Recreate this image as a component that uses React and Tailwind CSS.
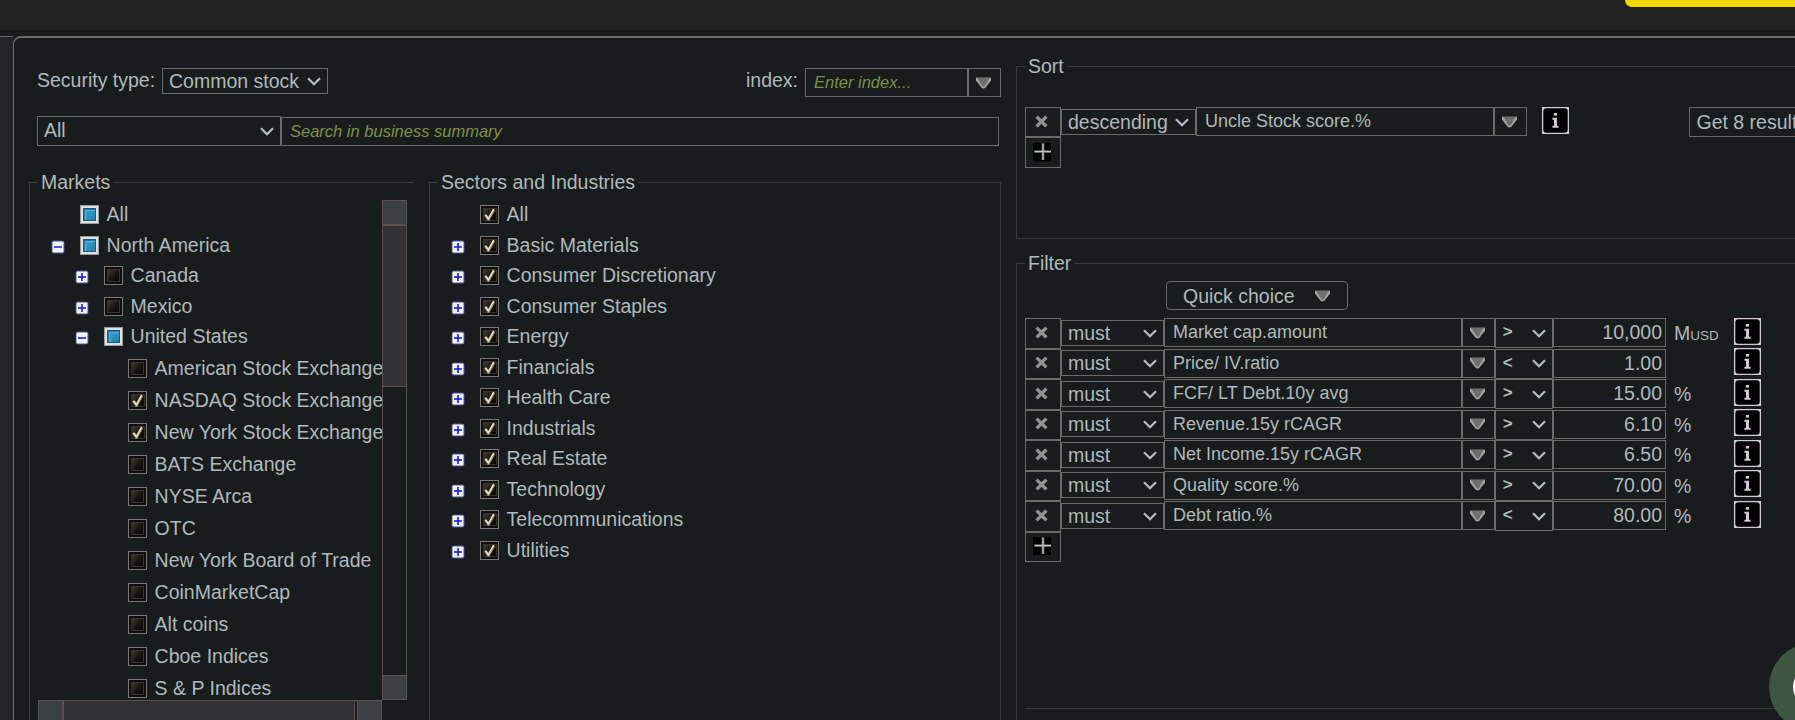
import React from "react";

const markets = [
  { label: "All", level: 0, state: "partial" },
  { label: "North America", level: 0, state: "partial", toggle: "minus" },
  { label: "Canada", level: 1, state: "off", toggle: "plus" },
  { label: "Mexico", level: 1, state: "off", toggle: "plus" },
  { label: "United States", level: 1, state: "partial", toggle: "minus" },
  { label: "American Stock Exchange", level: 2, state: "off" },
  { label: "NASDAQ Stock Exchange", level: 2, state: "on" },
  { label: "New York Stock Exchange", level: 2, state: "on" },
  { label: "BATS Exchange", level: 2, state: "off" },
  { label: "NYSE Arca", level: 2, state: "off" },
  { label: "OTC", level: 2, state: "off" },
  { label: "New York Board of Trade", level: 2, state: "off" },
  { label: "CoinMarketCap", level: 2, state: "off" },
  { label: "Alt coins", level: 2, state: "off" },
  { label: "Cboe Indices", level: 2, state: "off" },
  { label: "S & P Indices", level: 2, state: "off" },
];

const sectors = [
  "Basic Materials",
  "Consumer Discretionary",
  "Consumer Staples",
  "Energy",
  "Financials",
  "Health Care",
  "Industrials",
  "Real Estate",
  "Technology",
  "Telecommunications",
  "Utilities",
];

const filters = [
  { name: "Market cap.amount", op: ">", value: "10,000", unit: "M", sub: "USD" },
  { name: "Price/ IV.ratio", op: "<", value: "1.00", unit: "" },
  { name: "FCF/ LT Debt.10y avg", op: ">", value: "15.00", unit: "%" },
  { name: "Revenue.15y rCAGR", op: ">", value: "6.10", unit: "%" },
  { name: "Net Income.15y rCAGR", op: ">", value: "6.50", unit: "%" },
  { name: "Quality score.%", op: ">", value: "70.00", unit: "%" },
  { name: "Debt ratio.%", op: "<", value: "80.00", unit: "%" },
];

const indents = ["pl-[13px]", "pl-[37px]", "pl-[61px]"];

function Chevron() {
  return (
    <svg width="14" height="9" viewBox="0 0 14 9" className="shrink-0" fill="none">
      <path d="M1 1.2 L7 7.2 L13 1.2" stroke="#b4bcbe" strokeWidth="2.3" />
    </svg>
  );
}

function Triangle() {
  return (
    <svg width="15" height="12" viewBox="0 0 15 12" className="shrink-0">
      <path d="M0 1 H15 V3.4 L9.6 10.6 Q7.5 12.6 5.4 10.6 L0 3.4 Z" fill="#a2a2a2" />
      <path d="M1.4 1 H13.6 L8.6 9.2 Q7.5 10.2 6.4 9.2 Z" fill="#6e6e6e" />
      <path d="M0 0.5 H15" stroke="#4a4c4c" />
    </svg>
  );
}

function CrossIcon() {
  return (
    <svg width="13" height="13" viewBox="0 0 13 13" className="shrink-0">
      <path d="M1.6 1.6 L11.4 11.4 M11.4 1.6 L1.6 11.4" stroke="#929292" strokeWidth="3.4" />
    </svg>
  );
}

function PlusIcon() {
  return (
    <svg width="18" height="18" viewBox="0 0 18 18" className="shrink-0">
      <rect width="18" height="18" fill="#000" />
      <path d="M10 0.5 V17 M1.5 8.6 H18" stroke="#666" strokeWidth="2.6" />
      <path d="M10 0.5 V17 M1.5 8.5 H18" stroke="#c4c4c4" strokeWidth="1.2" />
    </svg>
  );
}

function InfoIcon() {
  return (
    <svg width="27" height="27" viewBox="0 0 27 27" className="shrink-0">
      <rect width="27" height="27" fill="#d3c9d4" />
      <rect x="1.3" y="1.3" width="24.4" height="24.4" rx="3" fill="#000" />
      <rect x="11.8" y="6" width="3.2" height="2.6" fill="#d3c9d4" />
      <path d="M10.4 10.8 H15 V18.8 H16.6 V20.8 H10.4 V18.8 H12 V12.8 H10.4 Z" fill="#d3c9d4" />
    </svg>
  );
}

function Toggle({ kind }) {
  return (
    <svg width="14" height="14" viewBox="0 0 14 14" className="mt-[3px] w-[14px] shrink-0">
      {kind && (
        <>
          <rect x="0.5" y="0.5" width="13" height="13" rx="2.5" fill="#5c69b8" opacity="0.75" />
          <rect x="1.5" y="1.5" width="11" height="11" rx="1" fill="#f1f3fd" />
          <path d="M3 7 H11" stroke="#1a1ae0" strokeWidth="1.6" />
          {kind === "plus" && <path d="M7 3 V11" stroke="#1a1ae0" strokeWidth="1.6" />}
        </>
      )}
    </svg>
  );
}

function Check({ state }) {
  if (state === "partial") {
    return (
      <span className="flex size-[19px] shrink-0 border border-[#9a9c9c] bg-[#dfe2e2] p-[2px]">
        <span className="flex-1 border border-[#1d5a7c] bg-linear-to-br from-[#32a8d8] to-[#2b7fab] shadow-[inset_1px_1px_0_#2079a5,inset_2px_2px_0_#4db4da]" />
      </span>
    );
  }
  return (
    <span className="flex size-[19px] shrink-0 border border-[#7a7a7a] bg-[#0f0e0d] p-[2px]">
      <span className="flex flex-1 border border-[#38332e] bg-linear-to-br from-[#3f3830] via-[#1a1816] to-[#060606]">
        {state === "on" && (
          <svg width="13" height="13" viewBox="0 0 13 13" className="-mt-px -ml-px shrink-0">
            <path d="M2.4 7 L5.4 11.6 L11 1.6" fill="none" stroke="#8a7d5c" strokeWidth="2.8" />
            <path d="M2.4 6.8 L5.3 10.8 L10.8 1.2" fill="none" stroke="#e9e2ce" strokeWidth="1.6" />
          </svg>
        )}
      </span>
    </span>
  );
}

function TreeRow({ label, level = 0, state, toggle }) {
  return (
    <div
      className={`flex shrink-0 items-center whitespace-nowrap ${level === 2 ? "h-8 pt-[1px]" : "h-[30.5px]"} ${indents[level]}`}
    >
      <Toggle kind={toggle} />
      <span className="ml-[15px] flex">
        <Check state={state} />
      </span>
      <span className="ml-[7.6px]">{label}</span>
    </div>
  );
}

function Select({ children, className }) {
  return (
    <div className={`flex shrink-0 items-center justify-between border border-[#6a6a6a] pr-[6px] pl-[6px] ${className}`}>
      <span>{children}</span>
      <Chevron />
    </div>
  );
}

function IconButton({ children, className }) {
  return (
    <div className={`flex shrink-0 items-center justify-center border border-[#6a6a6a] ${className}`}>{children}</div>
  );
}

function Legend({ children }) {
  return <legend className="h-[23px] px-[3px] leading-[23px]">{children}</legend>;
}

function MarketsPanel() {
  return (
    <fieldset className="h-[600px] w-[385px] min-w-0 shrink-0 border-t border-l border-[#383b39] pl-[8px]">
      <Legend>Markets</Legend>
      <div className="mt-[6px] flex h-[500px] w-[369px]">
        <div className="w-[344px] overflow-hidden">
          <div className="-mt-[0.5px] flex flex-col">
            {markets.map((m) => (
              <TreeRow key={m.label} {...m} />
            ))}
          </div>
        </div>
        <div className="flex w-[25px] flex-col border border-[#5c5050]">
          <div className="h-[24px] border-b border-[#5c5050] bg-[#3c4042]" />
          <div className="h-[162px] border-y border-[#5c5050] bg-[#323235]" />
          <div className="flex-1" />
          <div className="h-[24px] border-t border-[#5c5050] bg-[#3c4042]" />
        </div>
      </div>
      <div className="flex h-[25px] w-[344px] border border-[#5c5050]">
        <div className="w-[24px] border-r border-[#5c5050] bg-[#3c4042]" />
        <div className="w-[292px] border-x border-[#5c5050] bg-[#323235]" />
        <div className="flex-1" />
        <div className="w-[24px] border-l border-[#5c5050] bg-[#3c4042]" />
      </div>
    </fieldset>
  );
}

function SectorsPanel() {
  return (
    <fieldset className="ml-[15px] h-[600px] w-[572px] min-w-0 shrink-0 border border-[#383b39] pl-[8px]">
      <Legend>Sectors and Industries</Legend>
      <div className="mt-[5.5px] flex flex-col">
        <TreeRow label="All" state="on" />
        {sectors.map((s) => (
          <TreeRow key={s} label={s} state="on" toggle="plus" />
        ))}
      </div>
    </fieldset>
  );
}

function SortPanel() {
  return (
    <fieldset className="h-[184px] min-w-0 border border-[#383b39] pl-[8px]">
      <Legend>Sort</Legend>
      <div className="mt-[29px] flex items-start">
        <IconButton className="h-[30px] w-[36px] pr-[3px] pb-[2px]">
          <CrossIcon />
        </IconButton>
        <Select className="mt-[2px] h-[26px] w-[135px] pt-[1px]">descending</Select>
        <div className="h-[29px] w-[298px] border border-[#6a6a6a] pl-[8px] text-[18px] leading-[26px]">
          Uncle Stock score.%
        </div>
        <IconButton className="h-[29px] w-[33px] pt-[1px] pr-[2px]">
          <Triangle />
        </IconButton>
        <span className="ml-[15px]">
          <InfoIcon />
        </span>
        <div className="ml-[120px] h-[30px] w-[140px] border border-[#6a6a6a] pl-[6.5px] leading-[29px] whitespace-nowrap">
          Get 8 results
        </div>
      </div>
      <IconButton className="h-[31px] w-[36px] pr-[2px] pb-[1px]">
        <PlusIcon />
      </IconButton>
    </fieldset>
  );
}

function FilterRow({ name, op, value, unit, sub }) {
  return (
    <div className="flex h-[30.5px] items-start">
      <IconButton className="h-[30.5px] w-[36px] pr-[3px] pb-[2px]">
        <CrossIcon />
      </IconButton>
      <Select className="mt-[1.9px] h-[26px] w-[103px] pt-[1px]">must</Select>
      <div className="h-[29px] w-[298px] border border-[#6a6a6a] pl-[8px] text-[18px] leading-[26px]">{name}</div>
      <IconButton className="h-[29px] w-[33px] pt-[0.8px] pr-[2px]">
        <Triangle />
      </IconButton>
      <Select className="h-[30px] w-[58px]">
        <span className="ml-[0.7px] block pb-[2px] text-[17px] leading-[22px] font-bold">{op}</span>
      </Select>
      <div className="h-[29px] w-[113px] border border-[#6a6a6a] pr-[3px] text-right leading-[27px]">{value}</div>
      <div className="w-[68px] pl-[8px] leading-[30px]">
        {unit}
        <span className="text-[13.5px]">{sub}</span>
      </div>
      <span className="-mt-[0.1px]">
        <InfoIcon />
      </span>
    </div>
  );
}

function FilterPanel() {
  return (
    <fieldset className="mt-[13px] h-[520px] min-w-0 border border-[#383b39] pl-[8px]">
      <Legend>Filter</Legend>
      <div className="mt-[6px] ml-[141px] flex h-[29px] w-[182px] items-center justify-between rounded border border-[#6a6a6a] pr-[17px] pl-[16px]">
        <span className="pt-[2px]">Quick choice</span>
        <Triangle />
      </div>
      <div className="mt-[8px]">
        {filters.map((f) => (
          <FilterRow key={f.name} {...f} />
        ))}
      </div>
      <IconButton className="h-[30.5px] w-[36px] pr-[2px] pb-[1px]">
        <PlusIcon />
      </IconButton>
      <div className="mt-[146px] border-t border-[#383b39]" />
    </fieldset>
  );
}

export default function App() {
  return (
    <div className="relative flex h-[720px] w-full flex-col overflow-hidden bg-[#181c1d] font-['Liberation_Sans',Arial,sans-serif] text-[19.5px] text-[#b0b9bb]">
      <header className="h-[30px] shrink-0 bg-[#222222]">
        <div className="ml-auto h-[7px] w-[170px] rounded-bl-lg bg-[#f5d800]" />
      </header>
      <main className="mt-[6px] flex h-[684px]">
        <div className="flex h-full shrink-0 border-t border-[#6a6a6a] bg-[#222526]">
          <div className="w-[13px]" />
        </div>
        <section className="flex h-full min-w-0 flex-1 overflow-hidden rounded-tl-lg border-t-2 border-l border-[#6a6a6a] bg-[#181c1d]">
          <div className="w-[987px] shrink-0 pt-[30px] pl-[15px]">
            <div className="flex h-[29px] items-start pl-[8px]">
              <span className="w-[125px] leading-[25px]">Security type:</span>
              <Select className="h-[26px] w-[166px] pt-[1px]">Common stock</Select>
              <span className="ml-auto pr-[7px] leading-[25px]">index:</span>
              <div className="h-[29px] w-[163px] border border-[#6a6a6a] pl-[8px] text-[16.5px] leading-[27px] text-[#7f8f45] italic">
                Enter index...
              </div>
              <IconButton className="h-[29px] w-[33px] pr-[2px]">
                <Triangle />
              </IconButton>
            </div>
            <div className="mt-[19px] flex h-[30px] items-end pl-[8px]">
              <Select className="h-[30px] w-[244px]">All</Select>
              <div className="h-[29px] w-[718px] border border-[#6a6a6a] pl-[8px] text-[16.5px] leading-[27px] text-[#7f8f45] italic">
                Search in business summary
              </div>
            </div>
            <div className="mt-[25px] flex">
              <MarketsPanel />
              <SectorsPanel />
            </div>
          </div>
          <div className="ml-[15px] w-[830px] shrink-0 pt-[17px]">
            <SortPanel />
            <FilterPanel />
          </div>
        </section>
      </main>
      <div className="absolute top-[643px] left-[1769px] flex size-[88px] items-center justify-center rounded-full bg-[#3e5640]">
        <div className="size-[40px] rounded-full bg-white" />
      </div>
    </div>
  );
}
